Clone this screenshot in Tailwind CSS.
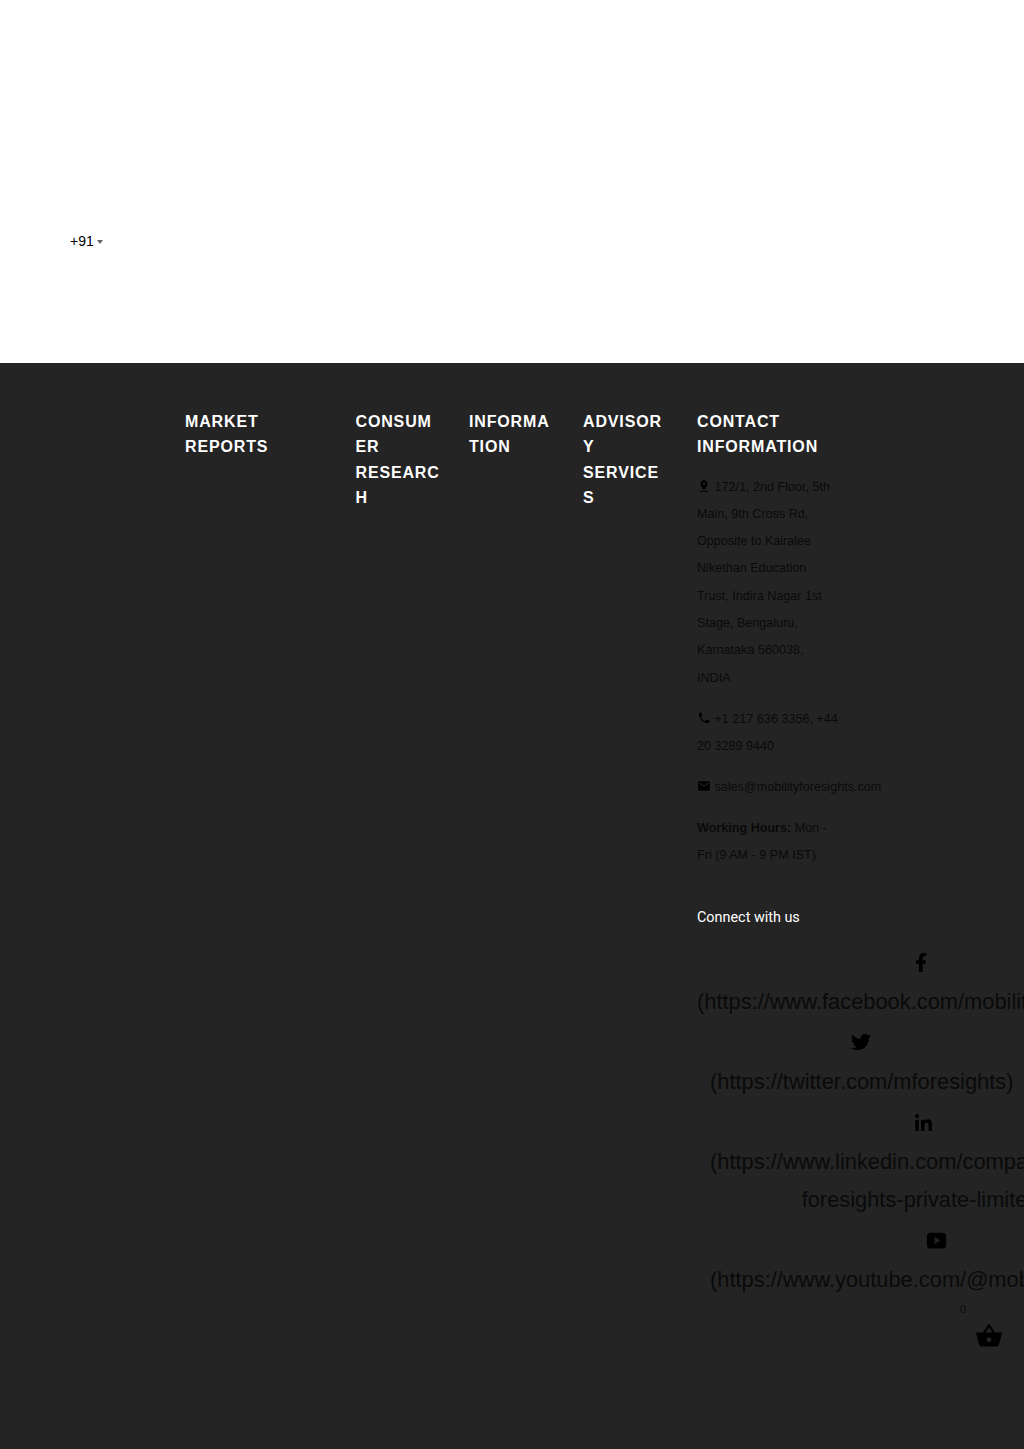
<!DOCTYPE html>
<html lang="en">
<head>
  <meta charset="UTF-8">
  <meta name="viewport" content="width=device-width, initial-scale=1.0">
  <title>Mobility Foresights</title>
  <script src="https://cdn.jsdelivr.net/npm/@tailwindcss/browser@4"></script>
</head>
<body class="bg-white font-['Liberation_Sans',Arial,sans-serif]">
<div class="relative h-[1449px] w-[1024px] overflow-hidden">

  <!-- Phone code selector -->
  <div class="h-[363px] pl-[70px] pt-[232px]">
    <div class="flex items-center gap-[3px] text-[14px] leading-[18px] text-black">
      <span>+91</span>
      <span class="mt-[1px] h-0 w-0 border-x-[3px] border-t-[4px] border-x-transparent border-t-[#666]"></span>
    </div>
  </div>

  <!-- Footer -->
  <footer class="flex h-[1086px] bg-[#242424] pl-[185px] pt-[45.5px]">
    <div class="w-[170.5px] pr-[30px]">
      <h4 class="text-[16px] font-bold leading-[25.5px] tracking-[0.85px] text-white">MARKET REPORTS</h4>
    </div>
    <div class="w-[113.5px] pr-[27px]">
      <h4 class="text-[16px] font-bold leading-[25.5px] tracking-[0.85px] text-white break-words">CONSUMER RESEARCH</h4>
    </div>
    <div class="w-[114px] pr-[27px]">
      <h4 class="text-[16px] font-bold leading-[25.5px] tracking-[0.85px] text-white break-words">INFORMATION</h4>
    </div>
    <div class="w-[114px] pr-[27px]">
      <h4 class="text-[16px] font-bold leading-[25.5px] tracking-[0.85px] text-white break-words">ADVISORY SERVICES</h4>
    </div>

    <div class="w-[327px]">
      <h4 class="text-[16px] font-bold leading-[25.5px] tracking-[0.85px] text-white">CONTACT<br>INFORMATION</h4>

      <div class="mt-[14px] w-[143px] text-[12.6px] leading-[27.3px] text-[#0a0a0a]">
        <p class="mb-[13.7px]">
          <svg class="inline-block h-[14px] w-[14px] align-[-2px]" viewBox="0 0 24 24" fill="#000"><path d="M18 8c0-3.310-2.690-6-6-6S6 4.690 6 8c0 4.500 6 11 6 11s6-6.500 6-11zm-8 0c0-1.100.9-2 2-2s2 .9 2 2-.89 2-2 2c-1.100 0-2-.9-2-2zM5 20v2h14v-2H5z"/></svg>
          172/1, 2nd Floor, 5th Main, 9th Cross Rd, Opposite to Kairalee Nikethan Education Trust, Indira Nagar 1st Stage, Bengaluru, Karnataka 560038, INDIA
        </p>
        <p class="mb-[13.7px]">
          <svg class="inline-block h-[14px] w-[14px] align-[-2px]" viewBox="0 0 24 24" fill="#000"><path d="M6.620 10.790c1.440 2.830 3.760 5.140 6.590 6.590l2.200-2.200c.27-.27.67-.36 1.020-.24 1.120.37 2.330.57 3.570.57.550 0 1 .45 1 1V20c0 .55-.45 1-1 1-9.390 0-17-7.610-17-17 0-.55.45-1 1-1h3.500c.55 0 1 .45 1 1 0 1.250.2 2.450.57 3.570.11.350.03.740-.25 1.020l-2.200 2.200z"/></svg>
          +1 217 636 3356, +44 20 3289 9440
        </p>
        <p class="mb-[13.7px] whitespace-nowrap">
          <svg class="inline-block h-[14px] w-[14px] align-[-2px]" viewBox="0 0 24 24" fill="#000"><path d="M20 4H4c-1.100 0-2 .9-2 2v12c0 1.100.9 2 2 2h16c1.100 0 2-.9 2-2V6c0-1.100-.9-2-2-2zm0 4-8 5-8-5V6l8 5 8-5v2z"/></svg>
          sales@mobilityforesights.com
        </p>
        <p><strong class="font-bold">Working Hours:</strong> Mon - Fri (9 AM - 9 PM IST)</p>
      </div>

      <p class="mt-[36px] font-['Roboto',sans-serif] text-[14.4px] leading-[25px] text-white">Connect with us</p>

      <!-- Social links -->
      <div class="mt-[11px] whitespace-nowrap text-[21.85px] leading-[38.4px] text-[#0a0a0a]">
        <a class="block w-fit text-center">
          <span class="flex h-[41.6px] items-center justify-center pr-[2px]">
            <svg class="h-[19px] w-[12px]" viewBox="0 0 320 512" fill="#000"><path d="M279.14 288l14.22-92.66h-88.91v-60.13c0-25.35 12.42-50.06 52.24-50.06h40.42V6.26S260.43 0 225.36 0c-73.22 0-121.08 44.38-121.08 124.72v70.62H22.89V288h81.39v224h100.17V288z"/></svg>
          </span>
          (https://www.facebook.com/mobilityforesights/)
        </a>
        <a class="ml-[13px] block w-fit text-center">
          <span class="flex h-[41.6px] items-center justify-center pr-[2px]">
            <svg class="h-[20px] w-[20px]" viewBox="0 0 512 512" fill="#000"><path d="M459.37 151.716c.325 4.548.325 9.097.325 13.645 0 138.72-105.583 298.558-298.558 298.558-59.452 0-114.68-17.219-161.137-47.106 8.447.974 16.568 1.299 25.34 1.299 49.055 0 94.213-16.568 130.274-44.832-46.132-.975-84.792-31.188-98.112-72.772 6.498.974 12.995 1.624 19.818 1.624 9.421 0 18.843-1.3 27.614-3.573-48.081-9.747-84.143-51.98-84.143-102.985v-1.299c13.969 7.797 30.214 12.67 47.431 13.319-28.264-18.843-46.781-51.005-46.781-87.391 0-19.492 5.197-37.36 14.294-52.954 51.655 63.675 129.3 105.258 216.365 109.807-1.624-7.797-2.599-15.918-2.599-24.04 0-57.828 46.782-104.934 104.934-104.934 30.213 0 57.502 12.67 76.67 33.137 23.715-4.548 46.456-13.32 66.599-25.34-7.798 24.366-24.366 44.833-46.132 57.827 21.117-2.273 41.584-8.122 60.426-16.243-14.292 20.791-32.161 39.308-52.628 54.253z"/></svg>
          </span>
          (https://twitter.com/mforesights)
        </a>
        <a class="ml-[13px] block w-fit text-center">
          <span class="flex h-[41.6px] items-center justify-center pr-[2px]">
            <svg class="h-[17px] w-[17px]" viewBox="0 0 448 448" fill="#000"><path d="M100.28 448H7.4V148.9h92.88zM53.79 108.1C24.09 108.1 0 83.5 0 53.8a53.79 53.79 0 0 1 107.58 0c0 29.7-24.1 54.3-53.79 54.3zM447.9 448h-92.68V302.4c0-34.7-.7-79.2-48.29-79.2-48.29 0-55.69 37.7-55.69 76.7V448h-92.78V148.9h89.08v40.8h1.3c12.4-23.5 42.69-48.3 87.88-48.3 94 0 111.28 61.9 111.28 142.3V448z"/></svg>
          </span>
          (https://www.linkedin.com/company/mobility-<br>foresights-private-limited)
        </a>
        <a class="ml-[13px] block w-fit text-center">
          <span class="flex h-[41.6px] items-center justify-center pr-[2px]">
            <svg class="h-[21px] w-[21px]" viewBox="0 0 24 24" fill="#000"><path fill-rule="evenodd" d="M5 3h14a4 4 0 0 1 4 4v10a4 4 0 0 1-4 4H5a4 4 0 0 1-4-4V7a4 4 0 0 1 4-4zm4.800 5v8l6.400-4z"/></svg>
          </span>
          (https://www.youtube.com/@mobilityforesights)
        </a>
      </div>
    </div>
  </footer>

  <!-- Cart widget -->
  <div class="absolute left-[960px] top-[1302px] text-[11px] leading-[14px] text-[#0a0a0a]">0</div>
  <svg class="absolute left-[975px] top-[1322px] h-[28px] w-[28px]" viewBox="0 0 24 24" fill="#000"><path d="M22 9h-4.790l-4.380-6.560c-.19-.28-.51-.42-.83-.42s-.64.14-.83.43L6.790 9H2c-.55 0-1 .45-1 1 0 .09.01.18.04.27l2.540 9.270c.23.84 1 1.460 1.920 1.460h13c.92 0 1.690-.62 1.930-1.460l2.540-9.270L23 10c0-.55-.45-1-1-1zM9 9l3-4.400L15 9H9zm3 8c-1.100 0-2-.9-2-2s.9-2 2-2 2 .9 2 2-.9 2-2 2z"/></svg>
</div>
</body>
</html>
